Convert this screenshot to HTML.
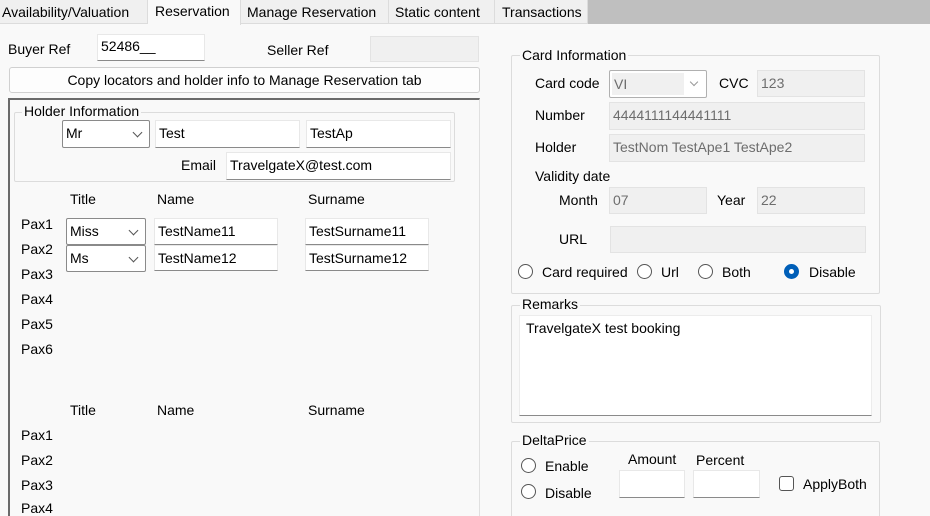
<!DOCTYPE html>
<html style="width:930px;height:516px;overflow:hidden"><head><meta charset="utf-8"><style>
*{box-sizing:border-box;margin:0;padding:0}
body{width:930px;height:516px;overflow:hidden;background:#f9f9f9;font-family:"Liberation Sans",sans-serif;font-size:14px;color:#000;position:relative}
.a{position:absolute;white-space:nowrap;line-height:16px}
.tab{position:absolute;top:0;height:24px;background:#f0f0f0;border-right:1px solid #dcdcdc;border-bottom:1px solid #dcdcdc;line-height:24px;padding-left:2px;font-size:14px}
.in{position:absolute;background:#fff;border:1px solid #e8e8e8;border-bottom:1px solid #8a8a8a;padding-left:3px;line-height:24px;white-space:nowrap}
.dis{position:absolute;background:#f0f0f0;border:1px solid #e3e3e3;color:#6d6d6d;padding-left:3px;line-height:24px;white-space:nowrap}
.cb{position:absolute;background:#fff;border:1px solid #8a8a8a;border-radius:2px;padding-left:3px;line-height:24px}
.cb:after{content:"";position:absolute;right:8px;top:8px;width:6px;height:6px;border-right:1px solid #555;border-bottom:1px solid #555;transform:rotate(45deg)}
.gb{position:absolute;border:1px solid #dcdcdc;border-radius:2px}
.lg{position:absolute;background:#f9f9f9;padding:0 2px;line-height:16px;white-space:nowrap}
.r{position:absolute;width:15px;height:15px;border:1px solid #555;border-radius:50%;background:#fff}
.r.on{border:1px solid #005fb8;background:#005fb8}
.r.on:after{content:"";position:absolute;left:4px;top:4px;width:5px;height:5px;border-radius:50%;background:#fff}
</style></head><body>
<div style="position:absolute;left:588px;top:0;width:342px;height:24px;background:#bfbfbf"></div>
<div class="tab" style="left:0;width:148px">Availability/Valuation</div>
<div class="tab" style="left:148px;width:93px;background:#f9f9f9;border-bottom:none;height:25px;line-height:22px;padding-left:7px">Reservation</div>
<div class="tab" style="left:241px;width:148px;padding-left:6px">Manage Reservation</div>
<div class="tab" style="left:389px;width:106px;padding-left:6px">Static content</div>
<div class="tab" style="left:495px;width:93px;padding-left:7px">Transactions</div>

<div class="a" style="left:8px;top:41px">Buyer Ref</div>
<div class="in" style="left:97px;top:34px;width:108px;height:27px;line-height:22px">52486__</div>
<div class="a" style="left:267px;top:42px">Seller Ref</div>
<div class="dis" style="left:370px;top:36px;width:109px;height:26px"></div>
<div style="position:absolute;left:9px;top:67px;width:471px;height:26px;background:#fdfdfd;border:1px solid #d0d0d0;border-radius:3px;text-align:center;line-height:24px">Copy locators and holder info to Manage Reservation tab</div>

<div style="position:absolute;left:8px;top:98px;width:472px;height:418px;border-top:2px solid #6a6a6a;border-left:2px solid #6a6a6a;border-right:1px solid #e0e0e0"></div>
<div class="gb" style="left:14px;top:112px;width:441px;height:70px"></div>
<div class="lg" style="left:22px;top:103px">Holder Information</div>
<div class="cb" style="left:62px;top:120px;width:88px;height:28px">Mr</div>
<div class="in" style="left:155px;top:120px;width:145px;height:28px">Test</div>
<div class="in" style="left:306px;top:120px;width:145px;height:28px">TestAp</div>
<div class="a" style="left:181px;top:157px">Email</div>
<div class="in" style="left:226px;top:152px;width:225px;height:28px">TravelgateX@test.com</div>

<div class="a" style="left:70px;top:191px">Title</div>
<div class="a" style="left:157px;top:191px">Name</div>
<div class="a" style="left:308px;top:191px">Surname</div>
<div class="a" style="left:21px;top:216px">Pax1</div>
<div class="a" style="left:21px;top:241px">Pax2</div>
<div class="a" style="left:21px;top:266px">Pax3</div>
<div class="a" style="left:21px;top:291px">Pax4</div>
<div class="a" style="left:21px;top:316px">Pax5</div>
<div class="a" style="left:21px;top:341px">Pax6</div>
<div class="cb" style="left:66px;top:218px;width:80px;height:27px">Miss</div>
<div class="cb" style="left:66px;top:245px;width:80px;height:27px">Ms</div>
<div class="in" style="left:154px;top:218px;width:124px;height:27px">TestName11</div>
<div class="in" style="left:154px;top:245px;width:124px;height:26px">TestName12</div>
<div class="in" style="left:305px;top:218px;width:124px;height:27px">TestSurname11</div>
<div class="in" style="left:305px;top:245px;width:124px;height:26px">TestSurname12</div>

<div class="a" style="left:70px;top:402px">Title</div>
<div class="a" style="left:157px;top:402px">Name</div>
<div class="a" style="left:308px;top:402px">Surname</div>
<div class="a" style="left:21px;top:427px">Pax1</div>
<div class="a" style="left:21px;top:452px">Pax2</div>
<div class="a" style="left:21px;top:477px">Pax3</div>
<div class="a" style="left:21px;top:500px">Pax4</div>

<div class="gb" style="left:511px;top:55px;width:369px;height:239px"></div>
<div class="lg" style="left:520px;top:47px">Card Information</div>
<div class="a" style="left:535px;top:75px">Card code</div>
<div style="position:absolute;left:609px;top:70px;width:98px;height:28px;border:1px solid #b0b0b0;border-radius:2px;background:#fff"><div style="position:absolute;left:2px;top:2px;width:72px;height:22px;background:#f0f0f0;color:#6d6d6d;padding-left:2px;line-height:22px">VI</div><div style="position:absolute;right:9px;top:8px;width:6px;height:6px;border-right:1px solid #999;border-bottom:1px solid #999;transform:rotate(45deg)"></div></div>
<div class="a" style="left:719px;top:75px">CVC</div>
<div class="dis" style="left:757px;top:70px;width:108px;height:27px">123</div>
<div class="a" style="left:535px;top:107px">Number</div>
<div class="dis" style="left:609px;top:102px;width:256px;height:28px">4444111144441111</div>
<div class="a" style="left:535px;top:139px">Holder</div>
<div class="dis" style="left:609px;top:134px;width:256px;height:28px">TestNom TestApe1 TestApe2</div>
<div class="a" style="left:535px;top:168px">Validity date</div>
<div class="a" style="left:559px;top:192px">Month</div>
<div class="dis" style="left:609px;top:187px;width:98px;height:27px">07</div>
<div class="a" style="left:717px;top:192px">Year</div>
<div class="dis" style="left:757px;top:187px;width:108px;height:27px">22</div>
<div class="a" style="left:559px;top:231px">URL</div>
<div class="dis" style="left:610px;top:226px;width:256px;height:27px"></div>
<div class="r" style="left:518px;top:264px"></div><div class="a" style="left:542px;top:264px">Card required</div>
<div class="r" style="left:637px;top:264px"></div><div class="a" style="left:661px;top:264px">Url</div>
<div class="r" style="left:698px;top:264px"></div><div class="a" style="left:722px;top:264px">Both</div>
<div class="r on" style="left:784px;top:264px"></div><div class="a" style="left:809px;top:264px">Disable</div>

<div class="gb" style="left:511px;top:305px;width:370px;height:118px"></div>
<div class="lg" style="left:520px;top:296px">Remarks</div>
<div style="position:absolute;left:519px;top:315px;width:353px;height:101px;background:#fff;border:1px solid #ececec;border-bottom:1px solid #8a8a8a;padding:4px 6px;line-height:16px">TravelgateX test booking</div>

<div class="gb" style="left:511px;top:441px;width:369px;height:80px"></div>
<div class="lg" style="left:520px;top:432px">DeltaPrice</div>
<div class="r" style="left:521px;top:458px"></div><div class="a" style="left:545px;top:458px">Enable</div>
<div class="r" style="left:521px;top:484px"></div><div class="a" style="left:545px;top:485px">Disable</div>
<div class="a" style="left:628px;top:451px">Amount</div>
<div class="a" style="left:696px;top:452px">Percent</div>
<div class="in" style="left:619px;top:470px;width:66px;height:28px"></div>
<div class="in" style="left:693px;top:470px;width:67px;height:28px"></div>
<div style="position:absolute;left:779px;top:476px;width:15px;height:15px;border:1px solid #555;border-radius:3px;background:#fff"></div>
<div class="a" style="left:803px;top:476px">ApplyBoth</div>
</body></html>
